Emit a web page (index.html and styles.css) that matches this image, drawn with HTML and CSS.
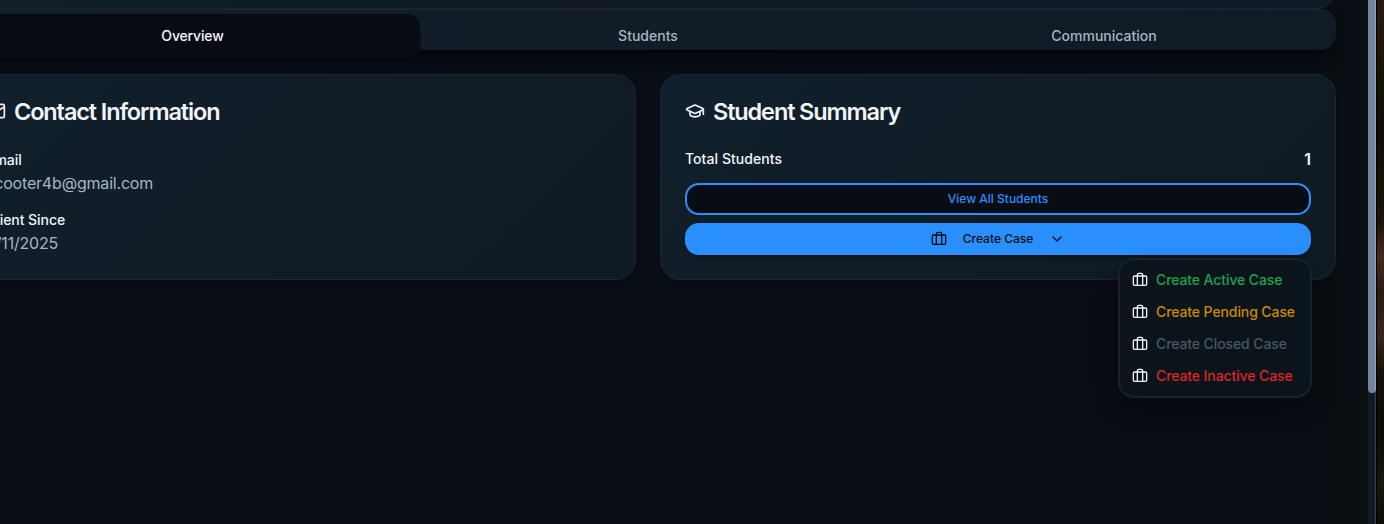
FILE: index.html
```html
<!DOCTYPE html>
<html lang="en">
<head>
<meta charset="utf-8">
<title>Client Overview</title>
<link rel="stylesheet" href="styles.css">
</head>
<body>
<svg class="sprite" aria-hidden="true">
  <symbol id="case" viewBox="0 0 24 24"><rect x="2" y="6" width="20" height="14" rx="2"/><path d="M16 20V4a2 2 0 0 0-2-2h-4a2 2 0 0 0-2 2v16"/></symbol>
  <symbol id="cap" viewBox="0 0 24 24"><path d="M21.42 10.922a1 1 0 0 0-.019-1.838L12.83 5.18a2 2 0 0 0-1.66 0L2.6 9.08a1 1 0 0 0 0 1.832l8.57 3.908a2 2 0 0 0 1.66 0z"/><path d="M22 10v6"/><path d="M6 12.5V16a6 3 0 0 0 12 0v-3.5"/></symbol>
  <symbol id="mail" viewBox="0 0 24 24"><rect x="2" y="4" width="20" height="16" rx="2"/><path d="m22 7-8.97 5.7a1.94 1.94 0 0 1-2.06 0L2 7"/></symbol>
  <symbol id="chevron" viewBox="0 0 24 24"><path d="m6 9 6 6 6-6"/></symbol>
</svg>
<div class="window">
  <main class="page">
    <div class="header-card"></div>
    <nav class="tabs">
      <a class="tab tab-active">Overview</a>
      <a class="tab">Students</a>
      <a class="tab">Communication</a>
    </nav>
    <div class="cards">
      <section class="card card-contact">
        <h2 class="card-title"><svg class="icon-lg"><use href="#mail"/></svg>Contact Information</h2>
        <dl class="details">
          <div class="detail"><dt>Email</dt><dd>scooter4b@gmail.com</dd></div>
          <div class="detail"><dt>Client Since</dt><dd>9/11/2025</dd></div>
        </dl>
      </section>
      <section class="card">
        <h2 class="card-title"><svg class="icon-lg"><use href="#cap"/></svg>Student Summary</h2>
        <div class="summary">
          <div class="total"><span>Total Students</span><strong>1</strong></div>
          <button class="button button-outline">View All Students</button>
          <div class="dropdown">
            <button class="button button-primary"><svg class="icon"><use href="#case"/></svg><span class="button-label">Create Case</span><svg class="icon-sm"><use href="#chevron"/></svg></button>
            <div class="menu">
              <a class="menu-item active"><svg class="icon"><use href="#case"/></svg><span>Create Active Case</span></a>
              <a class="menu-item pending"><svg class="icon"><use href="#case"/></svg><span>Create Pending Case</span></a>
              <a class="menu-item closed"><svg class="icon"><use href="#case"/></svg><span>Create Closed Case</span></a>
              <a class="menu-item inactive"><svg class="icon"><use href="#case"/></svg><span>Create Inactive Case</span></a>
            </div>
          </div>
        </div>
      </section>
    </div>
  </main>
  <div class="scrollbar"><div class="thumb"></div></div>
  <div class="backdrop"></div>
</div>
</body>
</html>
```
FILE: styles.css
```css
* { box-sizing: border-box; }
body {
  margin: 0;
  background: #090d14;
  color: #f1f4f9;
  font-family: Inter, "Liberation Sans", sans-serif;
  font-size: 14px;
  line-height: 20px;
  overflow: hidden;
}
.sprite { position: absolute; width: 0; height: 0; }
svg {
  fill: none;
  stroke: currentColor;
  stroke-width: 2;
  stroke-linecap: round;
  stroke-linejoin: round;
  flex-shrink: 0;
}
.icon { width: 16px; height: 16px; }
.icon-lg { width: 20px; height: 20px; }
.icon-sm { width: 16px; height: 16px; }
.window { display: flex; height: 524px; overflow: hidden; }
.page {
  flex: 1;
  min-width: 0;
  margin-left: -40px;
  padding-right: 32px;
  background: linear-gradient(90deg, #090d14 96%, #0a1014);
}
.header-card {
  height: 40px;
  margin-top: -31px;
  border: 1px solid #182632;
  border-radius: 20px;
  background: linear-gradient(100deg, #12202c, #111a22 45%, #101b26);
}
.tabs {
  display: grid;
  grid-template-columns: repeat(3, 1fr);
  height: 41px;
  padding: 4px 4px 0;
  border-top: 1px solid #172733;
  border-radius: 16px;
  background: linear-gradient(100deg, #12202c, #111c26 50%, #111b25);
  box-shadow: 0 6px 14px rgba(0, 0, 0, .65);
}
.tab {
  display: flex;
  align-items: center;
  justify-content: center;
  height: 44px;
  border-radius: 12px;
  color: #a9b4c2;
  font-weight: 450;
  letter-spacing: .02px;
}
.tab-active {
  background: #090d13;
  color: #f1f4f9;
  letter-spacing: -.15px;
  padding-left: 1px;
  box-shadow: 0 1px 3px rgba(0, 0, 0, .45);
}
.cards {
  position: relative;
  display: grid;
  grid-template-columns: 1fr 1fr;
  gap: 24px;
  margin-top: 24px;
}
.card {
  height: 206px;
  padding: 24px;
  border: 1px solid #172735;
  border-radius: 20px;
  background: linear-gradient(135deg, #11202d, #111b24 60%, #101a22);
  box-shadow: 0 1px 3px rgba(0, 0, 0, .3);
}
.card-contact { padding-left: 25px; }
.card-title {
  display: flex;
  align-items: center;
  gap: 8px;
  margin: 0;
  height: 24px;
  font-size: 23.5px;
  line-height: 24px;
  font-weight: 600;
  letter-spacing: -1.13px;
  padding-top: 2px;
}
.card-title svg { margin-top: -2px; }
.details { margin: 27px 0 0; display: grid; gap: 16px; }
.detail dt { line-height: 20px; font-weight: 450; letter-spacing: -.05px; }
.detail dd {
  margin: 0;
  height: 24px;
  padding-top: 1px;
  font-size: 16px;
  line-height: 24px;
  letter-spacing: -.19px;
  color: #a9b4c2;
}
.summary { margin-top: 24px; display: grid; gap: 8px; }
.total {
  display: flex;
  align-items: center;
  justify-content: space-between;
  height: 24px;
  margin-bottom: 4px;
  font-weight: 450;
  letter-spacing: .06px;
}
.total strong { font-size: 16px; font-weight: 600; }
.button {
  display: flex;
  align-items: center;
  justify-content: center;
  width: 100%;
  height: 32px;
  border: 0;
  border-radius: 14px;
  font: 500 12px/16px Inter, "Liberation Sans", sans-serif;
}
.button-outline { background: #080c14; color: #2a8fff; border: 2px solid #2a8fff; }
.button-primary { background: #2a90ff; color: #080c14; box-shadow: 0 2px 5px rgba(0, 0, 0, .4); }
.button-label { margin: 0 16px; }
.dropdown { position: relative; }
.menu {
  position: absolute;
  top: 35px;
  right: -1px;
  width: 194px;
  padding: 4px;
  border: 2px solid #17222d;
  border-radius: 16px;
  background: #0c141b;
  box-shadow: 0 10px 24px rgba(0, 0, 0, .3);
}
.menu-item {
  display: flex;
  align-items: center;
  gap: 8px;
  height: 32px;
  padding: 0 8px;
  font-weight: 450;
  letter-spacing: -.1px;
  white-space: nowrap;
}
.active span { color: #1aa34c; }
.pending span { color: #ca8a04; }
.closed span { color: #4b5563; }
.inactive span { color: #dc2626; }
.scrollbar { width: 8px; background: #0f1a24; border-right: 1px solid #35414d; }
.thumb { width: 8px; height: 393px; border-radius: 0 0 4px 4px; background: #70849b; border-right: 1px solid #92a2b5; }
.backdrop {
  width: 8px;
  border-left: 1px solid #000;
  background: linear-gradient(180deg, #2b190d 0, #201309 10%, #131405 15%, #0f0b06 25%, #141207 33%, #1c110a 42%, #49291a 49%, #2a190e 56%, #3a2418 64%, #130f08 72%, #090a06 82%, #15180b 92%, #0b0c07);
}
```
